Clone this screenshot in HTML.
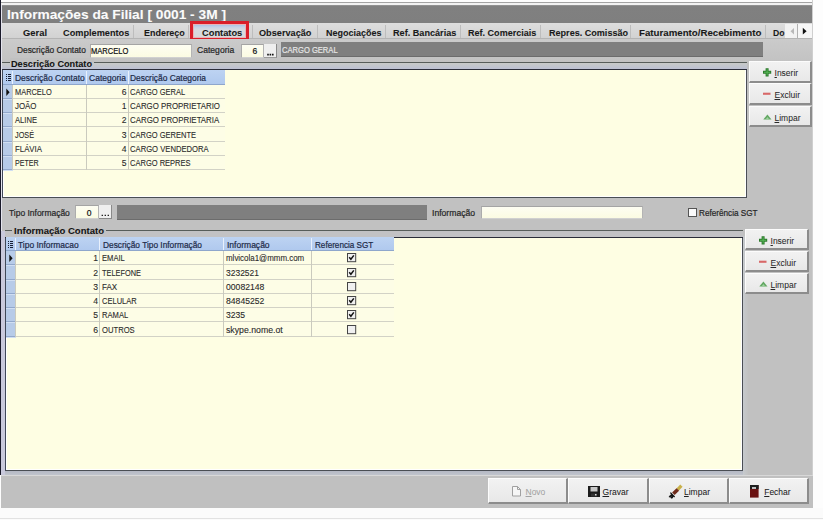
<!DOCTYPE html><html><head><meta charset="utf-8"><style>
html,body{margin:0;padding:0;}
body{width:823px;height:520px;position:relative;overflow:hidden;background:#fdfdfd;font-family:"Liberation Sans",sans-serif;}
.t{position:absolute;white-space:pre;line-height:1;-webkit-text-stroke:0.2px currentColor;}
.btn{position:absolute;background:linear-gradient(#f2f2f2,#e8e8e8);border-right:2px solid #8c8c8c;border-bottom:2px solid #8c8c8c;border-top:1px solid #fcfcfc;border-left:1px solid #fcfcfc;box-sizing:border-box;}
</style></head><body>
<div style="position:absolute;left:1.00px;top:2.00px;width:812.00px;height:506.00px;background:#c1c1c1"></div>
<div style="position:absolute;left:1.00px;top:2.00px;width:812.00px;height:1.00px;background:#a4a4a4"></div>
<div style="position:absolute;left:1.00px;top:3.00px;width:812.00px;height:2.00px;background:#f2f2f2"></div>
<div style="position:absolute;left:0.00px;top:0.00px;width:1.00px;height:475.00px;background:#1a1a2a"></div>
<div style="position:absolute;left:1.00px;top:5.00px;width:1.00px;height:470.00px;background:#e4e4ee"></div>
<div style="position:absolute;left:812.00px;top:0.00px;width:1.00px;height:508.00px;background:#cfcfcf"></div>
<div style="position:absolute;left:2.00px;top:5.00px;width:810.00px;height:18.00px;background:linear-gradient(#9a9a9a,#808080 1.5px,#7f7f7f)"></div>
<div class="t" style="left:6.80px;top:8.00px;font-size:13.7px;color:#fbfbfb;font-weight:bold;-webkit-text-stroke:0.08px currentColor;transform:scaleX(1.003);transform-origin:0 0;">Informações da Filial [ 0001 - 3M ]</div>
<div style="position:absolute;left:2.00px;top:23.00px;width:810.00px;height:15.00px;background:linear-gradient(#dddddd,#d2d2d2)"></div>
<div style="position:absolute;left:2.00px;top:37.50px;width:810.00px;height:1.00px;background:#b4b4b4"></div>
<div style="position:absolute;left:133.00px;top:25.00px;width:1.00px;height:12.50px;background:#bdbdbd"></div>
<div style="position:absolute;left:188.00px;top:25.00px;width:1.00px;height:12.50px;background:#bdbdbd"></div>
<div style="position:absolute;left:252.00px;top:25.00px;width:1.00px;height:12.50px;background:#bdbdbd"></div>
<div style="position:absolute;left:317.00px;top:25.00px;width:1.00px;height:12.50px;background:#bdbdbd"></div>
<div style="position:absolute;left:385.00px;top:25.00px;width:1.00px;height:12.50px;background:#bdbdbd"></div>
<div style="position:absolute;left:460.00px;top:25.00px;width:1.00px;height:12.50px;background:#bdbdbd"></div>
<div style="position:absolute;left:540.00px;top:25.00px;width:1.00px;height:12.50px;background:#bdbdbd"></div>
<div style="position:absolute;left:630.00px;top:25.00px;width:1.00px;height:12.50px;background:#bdbdbd"></div>
<div style="position:absolute;left:765.00px;top:25.00px;width:1.00px;height:12.50px;background:#bdbdbd"></div>
<div style="position:absolute;left:192.00px;top:23.50px;width:55.00px;height:16.00px;background:linear-gradient(#9ebae4,#c4d2e6 3px,#d8dadf 6px,#d8d8d8)"></div>
<div class="t" style="left:22.90px;top:27.67px;font-size:9.6px;color:#1a1a1a;font-weight:bold;-webkit-text-stroke:0.08px currentColor;transform:scaleX(0.978);transform-origin:0 0;">Geral</div>
<div class="t" style="left:62.90px;top:27.67px;font-size:9.6px;color:#1a1a1a;font-weight:bold;-webkit-text-stroke:0.08px currentColor;transform:scaleX(0.957);transform-origin:0 0;">Complementos</div>
<div class="t" style="left:144.20px;top:27.67px;font-size:9.6px;color:#1a1a1a;font-weight:bold;-webkit-text-stroke:0.08px currentColor;transform:scaleX(0.933);transform-origin:0 0;">Endereço</div>
<div class="t" style="left:201.70px;top:27.67px;font-size:9.6px;color:#1a1a1a;font-weight:bold;-webkit-text-stroke:0.08px currentColor;transform:scaleX(0.969);transform-origin:0 0;">Contatos</div>
<div class="t" style="left:259.00px;top:27.67px;font-size:9.6px;color:#1a1a1a;font-weight:bold;-webkit-text-stroke:0.08px currentColor;transform:scaleX(0.954);transform-origin:0 0;">Observação</div>
<div class="t" style="left:325.80px;top:27.67px;font-size:9.6px;color:#1a1a1a;font-weight:bold;-webkit-text-stroke:0.08px currentColor;transform:scaleX(0.936);transform-origin:0 0;">Negociações</div>
<div class="t" style="left:392.90px;top:27.67px;font-size:9.6px;color:#1a1a1a;font-weight:bold;-webkit-text-stroke:0.08px currentColor;transform:scaleX(0.950);transform-origin:0 0;">Ref. Bancárias</div>
<div class="t" style="left:468.10px;top:27.67px;font-size:9.6px;color:#1a1a1a;font-weight:bold;-webkit-text-stroke:0.08px currentColor;transform:scaleX(0.942);transform-origin:0 0;">Ref. Comerciais</div>
<div class="t" style="left:548.50px;top:27.67px;font-size:9.6px;color:#1a1a1a;font-weight:bold;-webkit-text-stroke:0.08px currentColor;transform:scaleX(0.944);transform-origin:0 0;">Repres. Comissão</div>
<div class="t" style="left:638.70px;top:27.67px;font-size:9.6px;color:#1a1a1a;font-weight:bold;-webkit-text-stroke:0.08px currentColor;transform:scaleX(1.011);transform-origin:0 0;">Faturamento/Recebimento</div>
<div class="t" style="left:773.30px;top:27.67px;font-size:9.6px;color:#1a1a1a;font-weight:bold;-webkit-text-stroke:0.08px currentColor;transform:scaleX(0.899);transform-origin:0 0;">Do</div>
<div style="position:absolute;left:190.00px;top:21.00px;width:59.00px;height:20.00px;border:3px solid #da1e2a;box-sizing:border-box;box-shadow:inset 0 0 0 1px #eab4b8"></div>
<div style="position:absolute;left:784.50px;top:24.00px;width:13.00px;height:14.00px;background:#f2f2f2;border-right:1px solid #b0b0b0;box-sizing:border-box"></div>
<div style="position:absolute;left:797.50px;top:24.00px;width:14.50px;height:14.00px;background:#f6f6f6"></div>
<svg style="position:absolute;left:785px;top:24px" width="27" height="14"><path d="M9 4 L5.5 7.2 L9 10.4Z" fill="#b8b8b8"/><path d="M17.8 3.8 L21.6 7.2 L17.8 10.6Z" fill="#111"/></svg>
<div style="position:absolute;left:2.00px;top:39.00px;width:810.00px;height:23.00px;background:linear-gradient(#cbcbcb,#c2c2c2)"></div>
<div class="t" style="left:17.40px;top:46.40px;font-size:8.5px;color:#262626;transform:scaleX(0.984);transform-origin:0 0;">Descrição Contato</div>
<div style="position:absolute;left:90.00px;top:43.80px;width:101.50px;height:14.20px;background:linear-gradient(#fdfdf2,#fbfbe2);border-top:1px solid #a4a4a4;border-left:1px solid #acacac;border-right:1px solid #b4b4b4;border-bottom:1px solid #d0d0d0;box-sizing:border-box"></div>
<div class="t" style="left:91.20px;top:46.92px;font-size:8.6px;color:#111;transform:scaleX(0.880);transform-origin:0 0;">MARCELO</div>
<div class="t" style="left:196.80px;top:46.40px;font-size:8.5px;color:#262626;transform:scaleX(1.009);transform-origin:0 0;">Categoria</div>
<div style="position:absolute;left:240.50px;top:44.00px;width:23.50px;height:14.00px;background:linear-gradient(#fdfdf2,#fbfbe2);border-top:1px solid #a4a4a4;border-left:1px solid #acacac;border-right:1px solid #b4b4b4;border-bottom:1px solid #d0d0d0;box-sizing:border-box"></div>
<div class="t" style="left:252.60px;top:47.00px;font-size:8.5px;color:#111;">6</div>
<div style="position:absolute;left:264.00px;top:44.00px;width:13.00px;height:14.00px;background:#efefef;border-right:1.5px solid #8a8a8a;border-bottom:1px solid #9a9a9a;box-sizing:border-box"></div>
<svg style="position:absolute;left:264px;top:44px" width="13" height="14"><path d="M3.2 10.6h1.6M5.6 10.6h1.6M8 10.6h1.6" stroke="#111" stroke-width="1.8"/></svg>
<div style="position:absolute;left:280.60px;top:42.00px;width:482.40px;height:14.80px;background:#7f7f7f;border-bottom:1px solid #6c6c6c;box-sizing:border-box"></div>
<div class="t" style="left:282.20px;top:46.10px;font-size:8.5px;color:#e6e6e6;transform:scaleX(0.892);transform-origin:0 0;">CARGO GERAL</div>
<div style="position:absolute;left:2.00px;top:62.00px;width:745.00px;height:1.00px;background:#575d5a"></div>
<div style="position:absolute;left:2.00px;top:63.00px;width:745.00px;height:6.30px;background:linear-gradient(#c8cac8,#bcc0d2)"></div>
<div style="position:absolute;left:2.00px;top:69.00px;width:745.00px;height:1.00px;background:#2a2c38"></div>
<div style="position:absolute;left:2.00px;top:70.00px;width:745.00px;height:127.50px;background:#fefee3;border-right:1.5px solid #4a4e54;border-bottom:1.5px solid #4a4e54;border-left:1px solid #404858;box-sizing:border-box;box-shadow:inset 1px 0 #ffffff, inset -1px -1px #ffffff"></div>
<div style="position:absolute;left:9.50px;top:58.00px;width:84.50px;height:5.20px;background:#c1c1c1"></div>
<div class="t" style="left:11.00px;top:58.54px;font-size:9.4px;color:#141414;font-weight:bold;-webkit-text-stroke:0.08px currentColor;transform:scaleX(0.978);transform-origin:0 0;">Descrição Contato</div>
<div style="position:absolute;left:1.00px;top:231.00px;width:3.50px;height:244.00px;background:#c9c9dc"></div>
<div style="position:absolute;left:5.00px;top:471.00px;width:738.00px;height:4.00px;background:linear-gradient(#b4b8c4,#c0c4cc)"></div>
<div style="position:absolute;left:743.00px;top:236.00px;width:5.00px;height:239.00px;background:linear-gradient(90deg,#c6cace,#c2c2c2)"></div>
<div style="position:absolute;left:4.50px;top:229.50px;width:738.00px;height:1.00px;background:#575d5a"></div>
<div style="position:absolute;left:4.50px;top:230.50px;width:738.00px;height:6.30px;background:#c2c2c4"></div>
<div style="position:absolute;left:4.50px;top:236.50px;width:738.00px;height:1.00px;background:#2a2c38"></div>
<div style="position:absolute;left:4.50px;top:237.50px;width:738.00px;height:233.00px;background:#fefee3;border-right:1.5px solid #4a4e54;border-bottom:1.5px solid #4a4e54;border-left:1px solid #404858;box-sizing:border-box;box-shadow:inset 1px 0 #ffffff, inset -1px -1px #ffffff"></div>
<div style="position:absolute;left:12.10px;top:225.50px;width:93.50px;height:5.20px;background:#c1c1c1"></div>
<div class="t" style="left:13.60px;top:226.04px;font-size:9.4px;color:#141414;font-weight:bold;-webkit-text-stroke:0.08px currentColor;transform:scaleX(1.016);transform-origin:0 0;">Informação Contato</div>
<div style="position:absolute;left:3.00px;top:69.50px;width:221.50px;height:15.00px;background:linear-gradient(#bdd3f2,#b0c9ee);border-bottom:1px solid #8ea6cc;box-sizing:border-box"></div>
<div style="position:absolute;left:3.00px;top:84.50px;width:10.00px;height:85.62px;background:#b7cbe8"></div>
<div style="position:absolute;left:13.00px;top:84.50px;width:211.50px;height:85.62px;background:#fdfde6"></div>
<div style="position:absolute;left:13.00px;top:97.77px;width:211.50px;height:1.00px;background:#d2d2c6"></div>
<div style="position:absolute;left:3.00px;top:97.77px;width:10.00px;height:1.00px;background:#92a8cc"></div>
<div style="position:absolute;left:3.00px;top:98.77px;width:10.00px;height:1.00px;background:#d0def2"></div>
<div style="position:absolute;left:13.00px;top:112.04px;width:211.50px;height:1.00px;background:#d2d2c6"></div>
<div style="position:absolute;left:3.00px;top:112.04px;width:10.00px;height:1.00px;background:#92a8cc"></div>
<div style="position:absolute;left:3.00px;top:113.04px;width:10.00px;height:1.00px;background:#d0def2"></div>
<div style="position:absolute;left:13.00px;top:126.31px;width:211.50px;height:1.00px;background:#d2d2c6"></div>
<div style="position:absolute;left:3.00px;top:126.31px;width:10.00px;height:1.00px;background:#92a8cc"></div>
<div style="position:absolute;left:3.00px;top:127.31px;width:10.00px;height:1.00px;background:#d0def2"></div>
<div style="position:absolute;left:13.00px;top:140.58px;width:211.50px;height:1.00px;background:#d2d2c6"></div>
<div style="position:absolute;left:3.00px;top:140.58px;width:10.00px;height:1.00px;background:#92a8cc"></div>
<div style="position:absolute;left:3.00px;top:141.58px;width:10.00px;height:1.00px;background:#d0def2"></div>
<div style="position:absolute;left:13.00px;top:154.85px;width:211.50px;height:1.00px;background:#d2d2c6"></div>
<div style="position:absolute;left:3.00px;top:154.85px;width:10.00px;height:1.00px;background:#92a8cc"></div>
<div style="position:absolute;left:3.00px;top:155.85px;width:10.00px;height:1.00px;background:#d0def2"></div>
<div style="position:absolute;left:13.00px;top:169.12px;width:211.50px;height:1.00px;background:#d2d2c6"></div>
<div style="position:absolute;left:3.00px;top:169.12px;width:10.00px;height:1.00px;background:#92a8cc"></div>
<div style="position:absolute;left:3.00px;top:170.12px;width:10.00px;height:1.00px;background:#d0def2"></div>
<div style="position:absolute;left:12.00px;top:70.50px;width:1.00px;height:13.00px;background:#e8f0fc"></div>
<div style="position:absolute;left:12.00px;top:84.50px;width:1.00px;height:85.62px;background:#cacabe"></div>
<div style="position:absolute;left:86.00px;top:70.50px;width:1.00px;height:13.00px;background:#e8f0fc"></div>
<div style="position:absolute;left:86.00px;top:84.50px;width:1.00px;height:85.62px;background:#cacabe"></div>
<div style="position:absolute;left:127.50px;top:70.50px;width:1.00px;height:13.00px;background:#e8f0fc"></div>
<div style="position:absolute;left:127.50px;top:84.50px;width:1.00px;height:85.62px;background:#cacabe"></div>
<div style="position:absolute;left:223.50px;top:70.50px;width:1.00px;height:13.00px;#8a9ab8"></div>
<div style="position:absolute;left:223.50px;top:84.50px;width:1.00px;height:85.62px;#a8a8a0"></div>
<div class="t" style="left:14.50px;top:73.50px;font-size:8.5px;color:#1c2a48;transform:scaleX(0.997);transform-origin:0 0;">Descrição Contato</div>
<div class="t" style="left:88.50px;top:73.50px;font-size:8.5px;color:#1c2a48;transform:scaleX(1.001);transform-origin:0 0;">Categoria</div>
<div class="t" style="left:130.00px;top:73.50px;font-size:8.5px;color:#1c2a48;transform:scaleX(0.987);transform-origin:0 0;">Descrição Categoria</div>
<svg style="position:absolute;left:6px;top:73px" width="6" height="9"><path d="M0 1.5h1M0 3.5h1M0 5.5h1M0 7.5h1M2 1.5h3M2 3.5h3M2 5.5h3M2 7.5h3" stroke="#1a2238" stroke-width="1"/></svg>
<svg style="position:absolute;left:6.2px;top:87.7px" width="6" height="9"><path d="M0.3 0.5 L3.6 4.2 L0.3 7.9Z" fill="#111"/></svg>
<div class="t" style="left:14.70px;top:87.92px;font-size:8.6px;color:#2a2a2a;transform:scaleX(0.864);transform-origin:0 0;-webkit-text-stroke:0.1px #2a2a2a">MARCELO</div>
<div class="t" style="left:26.50px;width:100px;text-align:right;top:87.92px;font-size:8.6px;color:#2a2a2a;-webkit-text-stroke:0.1px #2a2a2a">6</div>
<div class="t" style="left:130.20px;top:87.92px;font-size:8.6px;color:#2a2a2a;transform:scaleX(0.877);transform-origin:0 0;-webkit-text-stroke:0.1px #2a2a2a">CARGO GERAL</div>
<div class="t" style="left:14.70px;top:102.19px;font-size:8.6px;color:#2a2a2a;transform:scaleX(0.919);transform-origin:0 0;-webkit-text-stroke:0.1px #2a2a2a">JOÃO</div>
<div class="t" style="left:26.50px;width:100px;text-align:right;top:102.19px;font-size:8.6px;color:#2a2a2a;-webkit-text-stroke:0.1px #2a2a2a">1</div>
<div class="t" style="left:130.20px;top:102.19px;font-size:8.6px;color:#2a2a2a;transform:scaleX(0.916);transform-origin:0 0;-webkit-text-stroke:0.1px #2a2a2a">CARGO PROPRIETARIO</div>
<div class="t" style="left:14.70px;top:116.46px;font-size:8.6px;color:#2a2a2a;transform:scaleX(0.886);transform-origin:0 0;-webkit-text-stroke:0.1px #2a2a2a">ALINE</div>
<div class="t" style="left:26.50px;width:100px;text-align:right;top:116.46px;font-size:8.6px;color:#2a2a2a;-webkit-text-stroke:0.1px #2a2a2a">2</div>
<div class="t" style="left:130.20px;top:116.46px;font-size:8.6px;color:#2a2a2a;transform:scaleX(0.918);transform-origin:0 0;-webkit-text-stroke:0.1px #2a2a2a">CARGO PROPRIETARIA</div>
<div class="t" style="left:14.70px;top:130.73px;font-size:8.6px;color:#2a2a2a;transform:scaleX(0.846);transform-origin:0 0;-webkit-text-stroke:0.1px #2a2a2a">JOSÉ</div>
<div class="t" style="left:26.50px;width:100px;text-align:right;top:130.73px;font-size:8.6px;color:#2a2a2a;-webkit-text-stroke:0.1px #2a2a2a">3</div>
<div class="t" style="left:130.20px;top:130.73px;font-size:8.6px;color:#2a2a2a;transform:scaleX(0.875);transform-origin:0 0;-webkit-text-stroke:0.1px #2a2a2a">CARGO GERENTE</div>
<div class="t" style="left:14.70px;top:145.00px;font-size:8.6px;color:#2a2a2a;transform:scaleX(0.911);transform-origin:0 0;-webkit-text-stroke:0.1px #2a2a2a">FLÁVIA</div>
<div class="t" style="left:26.50px;width:100px;text-align:right;top:145.00px;font-size:8.6px;color:#2a2a2a;-webkit-text-stroke:0.1px #2a2a2a">4</div>
<div class="t" style="left:130.20px;top:145.00px;font-size:8.6px;color:#2a2a2a;transform:scaleX(0.891);transform-origin:0 0;-webkit-text-stroke:0.1px #2a2a2a">CARGO VENDEDORA</div>
<div class="t" style="left:14.70px;top:159.27px;font-size:8.6px;color:#2a2a2a;transform:scaleX(0.827);transform-origin:0 0;-webkit-text-stroke:0.1px #2a2a2a">PETER</div>
<div class="t" style="left:26.50px;width:100px;text-align:right;top:159.27px;font-size:8.6px;color:#2a2a2a;-webkit-text-stroke:0.1px #2a2a2a">5</div>
<div class="t" style="left:130.20px;top:159.27px;font-size:8.6px;color:#2a2a2a;transform:scaleX(0.875);transform-origin:0 0;-webkit-text-stroke:0.1px #2a2a2a">CARGO REPRES</div>
<div style="position:absolute;left:6.00px;top:236.50px;width:387.50px;height:14.50px;background:linear-gradient(#bdd3f2,#b0c9ee);border-bottom:1px solid #8ea6cc;box-sizing:border-box"></div>
<div style="position:absolute;left:6.00px;top:251.00px;width:9.50px;height:85.50px;background:#b7cbe8"></div>
<div style="position:absolute;left:15.50px;top:251.00px;width:378.00px;height:85.50px;background:#fdfde6"></div>
<div style="position:absolute;left:15.50px;top:264.25px;width:378.00px;height:1.00px;background:#d2d2c6"></div>
<div style="position:absolute;left:6.00px;top:264.25px;width:9.50px;height:1.00px;background:#92a8cc"></div>
<div style="position:absolute;left:6.00px;top:265.25px;width:9.50px;height:1.00px;background:#d0def2"></div>
<div style="position:absolute;left:15.50px;top:278.50px;width:378.00px;height:1.00px;background:#d2d2c6"></div>
<div style="position:absolute;left:6.00px;top:278.50px;width:9.50px;height:1.00px;background:#92a8cc"></div>
<div style="position:absolute;left:6.00px;top:279.50px;width:9.50px;height:1.00px;background:#d0def2"></div>
<div style="position:absolute;left:15.50px;top:292.75px;width:378.00px;height:1.00px;background:#d2d2c6"></div>
<div style="position:absolute;left:6.00px;top:292.75px;width:9.50px;height:1.00px;background:#92a8cc"></div>
<div style="position:absolute;left:6.00px;top:293.75px;width:9.50px;height:1.00px;background:#d0def2"></div>
<div style="position:absolute;left:15.50px;top:307.00px;width:378.00px;height:1.00px;background:#d2d2c6"></div>
<div style="position:absolute;left:6.00px;top:307.00px;width:9.50px;height:1.00px;background:#92a8cc"></div>
<div style="position:absolute;left:6.00px;top:308.00px;width:9.50px;height:1.00px;background:#d0def2"></div>
<div style="position:absolute;left:15.50px;top:321.25px;width:378.00px;height:1.00px;background:#d2d2c6"></div>
<div style="position:absolute;left:6.00px;top:321.25px;width:9.50px;height:1.00px;background:#92a8cc"></div>
<div style="position:absolute;left:6.00px;top:322.25px;width:9.50px;height:1.00px;background:#d0def2"></div>
<div style="position:absolute;left:15.50px;top:335.50px;width:378.00px;height:1.00px;background:#d2d2c6"></div>
<div style="position:absolute;left:6.00px;top:335.50px;width:9.50px;height:1.00px;background:#92a8cc"></div>
<div style="position:absolute;left:6.00px;top:336.50px;width:9.50px;height:1.00px;background:#d0def2"></div>
<div style="position:absolute;left:14.50px;top:237.50px;width:1.00px;height:12.50px;background:#e8f0fc"></div>
<div style="position:absolute;left:14.50px;top:251.00px;width:1.00px;height:85.50px;background:#cacabe"></div>
<div style="position:absolute;left:99.00px;top:237.50px;width:1.00px;height:12.50px;background:#e8f0fc"></div>
<div style="position:absolute;left:99.00px;top:251.00px;width:1.00px;height:85.50px;background:#cacabe"></div>
<div style="position:absolute;left:223.00px;top:237.50px;width:1.00px;height:12.50px;background:#e8f0fc"></div>
<div style="position:absolute;left:223.00px;top:251.00px;width:1.00px;height:85.50px;background:#cacabe"></div>
<div style="position:absolute;left:311.00px;top:237.50px;width:1.00px;height:12.50px;background:#e8f0fc"></div>
<div style="position:absolute;left:311.00px;top:251.00px;width:1.00px;height:85.50px;background:#cacabe"></div>
<div style="position:absolute;left:392.50px;top:237.50px;width:1.00px;height:12.50px;#8a9ab8"></div>
<div style="position:absolute;left:392.50px;top:251.00px;width:1.00px;height:85.50px;#a8a8a0"></div>
<div class="t" style="left:18.00px;top:240.50px;font-size:8.5px;color:#1c2a48;transform:scaleX(0.992);transform-origin:0 0;">Tipo Informacao</div>
<div class="t" style="left:102.50px;top:240.50px;font-size:8.5px;color:#1c2a48;transform:scaleX(0.979);transform-origin:0 0;">Descrição Tipo Informação</div>
<div class="t" style="left:226.50px;top:240.50px;font-size:8.5px;color:#1c2a48;transform:scaleX(1.002);transform-origin:0 0;">Informação</div>
<div class="t" style="left:314.50px;top:240.50px;font-size:8.5px;color:#1c2a48;transform:scaleX(0.956);transform-origin:0 0;">Referencia SGT</div>
<svg style="position:absolute;left:8px;top:240px" width="6" height="9"><path d="M0 1.5h1M0 3.5h1M0 5.5h1M0 7.5h1M2 1.5h3M2 3.5h3M2 5.5h3M2 7.5h3" stroke="#1a2238" stroke-width="1"/></svg>
<svg style="position:absolute;left:9.2px;top:254.2px" width="6" height="9"><path d="M0.3 0.5 L3.6 4.2 L0.3 7.9Z" fill="#111"/></svg>
<div class="t" style="left:-2.00px;width:100px;text-align:right;top:254.42px;font-size:8.6px;color:#2a2a2a;-webkit-text-stroke:0.1px #2a2a2a">1</div>
<div class="t" style="left:101.70px;top:254.42px;font-size:8.6px;color:#2a2a2a;transform:scaleX(0.884);transform-origin:0 0;-webkit-text-stroke:0.1px #2a2a2a">EMAIL</div>
<div class="t" style="left:225.70px;top:254.42px;font-size:8.6px;color:#2a2a2a;transform:scaleX(0.924);transform-origin:0 0;-webkit-text-stroke:0.1px #2a2a2a">mlvicola1@mmm.com</div>
<svg style="position:absolute;left:347.45px;top:253.40px" width="10" height="10"><rect x="0.5" y="0.5" width="8.2" height="8.2" fill="#f0f0f0" stroke="#454545" stroke-width="1"/><path d="M2.2 4.2 L3.9 6.2 L6.8 2.4" stroke="#111" stroke-width="1.5" fill="none"/></svg>
<div class="t" style="left:-2.00px;width:100px;text-align:right;top:268.67px;font-size:8.6px;color:#2a2a2a;-webkit-text-stroke:0.1px #2a2a2a">2</div>
<div class="t" style="left:101.70px;top:268.67px;font-size:8.6px;color:#2a2a2a;transform:scaleX(0.857);transform-origin:0 0;-webkit-text-stroke:0.1px #2a2a2a">TELEFONE</div>
<div class="t" style="left:225.70px;top:268.67px;font-size:8.6px;color:#2a2a2a;transform:scaleX(0.986);transform-origin:0 0;-webkit-text-stroke:0.1px #2a2a2a">3232521</div>
<svg style="position:absolute;left:347.45px;top:267.65px" width="10" height="10"><rect x="0.5" y="0.5" width="8.2" height="8.2" fill="#f0f0f0" stroke="#454545" stroke-width="1"/><path d="M2.2 4.2 L3.9 6.2 L6.8 2.4" stroke="#111" stroke-width="1.5" fill="none"/></svg>
<div class="t" style="left:-2.00px;width:100px;text-align:right;top:282.92px;font-size:8.6px;color:#2a2a2a;-webkit-text-stroke:0.1px #2a2a2a">3</div>
<div class="t" style="left:101.70px;top:282.92px;font-size:8.6px;color:#2a2a2a;transform:scaleX(0.935);transform-origin:0 0;-webkit-text-stroke:0.1px #2a2a2a">FAX</div>
<div class="t" style="left:225.70px;top:282.92px;font-size:8.6px;color:#2a2a2a;transform:scaleX(1.004);transform-origin:0 0;-webkit-text-stroke:0.1px #2a2a2a">00082148</div>
<svg style="position:absolute;left:347.45px;top:281.90px" width="10" height="10"><rect x="0.5" y="0.5" width="8.2" height="8.2" fill="#f0f0f0" stroke="#454545" stroke-width="1"/></svg>
<div class="t" style="left:-2.00px;width:100px;text-align:right;top:297.17px;font-size:8.6px;color:#2a2a2a;-webkit-text-stroke:0.1px #2a2a2a">4</div>
<div class="t" style="left:101.70px;top:297.17px;font-size:8.6px;color:#2a2a2a;transform:scaleX(0.875);transform-origin:0 0;-webkit-text-stroke:0.1px #2a2a2a">CELULAR</div>
<div class="t" style="left:225.70px;top:297.17px;font-size:8.6px;color:#2a2a2a;transform:scaleX(1.004);transform-origin:0 0;-webkit-text-stroke:0.1px #2a2a2a">84845252</div>
<svg style="position:absolute;left:347.45px;top:296.15px" width="10" height="10"><rect x="0.5" y="0.5" width="8.2" height="8.2" fill="#f0f0f0" stroke="#454545" stroke-width="1"/><path d="M2.2 4.2 L3.9 6.2 L6.8 2.4" stroke="#111" stroke-width="1.5" fill="none"/></svg>
<div class="t" style="left:-2.00px;width:100px;text-align:right;top:311.42px;font-size:8.6px;color:#2a2a2a;-webkit-text-stroke:0.1px #2a2a2a">5</div>
<div class="t" style="left:101.70px;top:311.42px;font-size:8.6px;color:#2a2a2a;transform:scaleX(0.885);transform-origin:0 0;-webkit-text-stroke:0.1px #2a2a2a">RAMAL</div>
<div class="t" style="left:225.70px;top:311.42px;font-size:8.6px;color:#2a2a2a;transform:scaleX(0.999);transform-origin:0 0;-webkit-text-stroke:0.1px #2a2a2a">3235</div>
<svg style="position:absolute;left:347.45px;top:310.40px" width="10" height="10"><rect x="0.5" y="0.5" width="8.2" height="8.2" fill="#f0f0f0" stroke="#454545" stroke-width="1"/><path d="M2.2 4.2 L3.9 6.2 L6.8 2.4" stroke="#111" stroke-width="1.5" fill="none"/></svg>
<div class="t" style="left:-2.00px;width:100px;text-align:right;top:325.67px;font-size:8.6px;color:#2a2a2a;-webkit-text-stroke:0.1px #2a2a2a">6</div>
<div class="t" style="left:101.70px;top:325.67px;font-size:8.6px;color:#2a2a2a;transform:scaleX(0.889);transform-origin:0 0;-webkit-text-stroke:0.1px #2a2a2a">OUTROS</div>
<div class="t" style="left:225.70px;top:325.67px;font-size:8.6px;color:#2a2a2a;transform:scaleX(1.014);transform-origin:0 0;-webkit-text-stroke:0.1px #2a2a2a">skype.nome.ot</div>
<svg style="position:absolute;left:347.45px;top:324.65px" width="10" height="10"><rect x="0.5" y="0.5" width="8.2" height="8.2" fill="#f0f0f0" stroke="#454545" stroke-width="1"/></svg>
<div class="t" style="left:9.40px;top:208.50px;font-size:8.5px;color:#262626;transform:scaleX(0.995);transform-origin:0 0;">Tipo Informação</div>
<div style="position:absolute;left:74.50px;top:205.00px;width:24.00px;height:14.00px;background:linear-gradient(#fdfdf2,#fbfbe2);border-top:1px solid #a4a4a4;border-left:1px solid #acacac;border-right:1px solid #b4b4b4;border-bottom:1px solid #d0d0d0;box-sizing:border-box"></div>
<div class="t" style="left:86.80px;top:208.70px;font-size:8.5px;color:#111;">0</div>
<div style="position:absolute;left:98.50px;top:205.00px;width:13.50px;height:14.00px;background:#efefef;border-right:1px solid #8a8a8a;border-bottom:1px solid #8a8a8a;box-sizing:border-box"></div>
<svg style="position:absolute;left:98.5px;top:205px" width="13" height="14"><path d="M2.6 10.4h1.4M5.6 10.4h1.4M8.6 10.4h1.4" stroke="#222" stroke-width="1.4"/></svg>
<div style="position:absolute;left:116.50px;top:205.20px;width:310.20px;height:14.50px;background:#7f7f7f;border-bottom:1px solid #6c6c6c;box-sizing:border-box"></div>
<div class="t" style="left:432.10px;top:209.10px;font-size:8.5px;color:#262626;transform:scaleX(1.013);transform-origin:0 0;">Informação</div>
<div style="position:absolute;left:480.70px;top:206.30px;width:162.00px;height:13.00px;background:linear-gradient(#fdfdf2,#fbfbe2);border-top:1px solid #a4a4a4;border-left:1px solid #acacac;border-right:1px solid #b4b4b4;border-bottom:1px solid #d0d0d0;box-sizing:border-box"></div>
<svg style="position:absolute;left:688px;top:208px" width="10" height="10"><rect x="0.5" y="0.5" width="8" height="8" fill="#fafafa" stroke="#555" stroke-width="1"/></svg>
<div class="t" style="left:699.00px;top:208.90px;font-size:8.5px;color:#262626;transform:scaleX(0.961);transform-origin:0 0;">Referência SGT</div>
<div class="btn" style="left:748.5px;top:61px;width:63.2px;height:22px"></div>
<svg style="position:absolute;left:763.0px;top:67.5px" width="9" height="9"><path d="M2.6 0.2h3v2.6h2.6v3h-2.6v2.6h-3v-2.6h-2.6v-3h2.6z" fill="#2c7a2c"/><path d="M3.6 1.2h1v2.6h2.6v1h-2.6v2.6h-1v-2.6h-2.6v-1h2.6z" fill="#58b858"/></svg>
<div class="t" style="left:774.50px;top:68.60px;font-size:8.5px;color:#2a2a2a;-webkit-text-stroke:0.05px #2a2a2a"><u>I</u>nserir</div>
<div class="btn" style="left:748.5px;top:83px;width:63.2px;height:22px"></div>
<svg style="position:absolute;left:763.2px;top:92px" width="9" height="4"><rect x="0" y="0.7" width="7.5" height="2.1" fill="#d86868"/></svg>
<div class="t" style="left:774.50px;top:90.60px;font-size:8.5px;color:#2a2a2a;-webkit-text-stroke:0.05px #2a2a2a"><u>E</u>xcluir</div>
<div class="btn" style="left:748.5px;top:106px;width:63.2px;height:21px"></div>
<svg style="position:absolute;left:763.0px;top:114.2px" width="10" height="6"><path d="M0.3 5.5 L4.4 0.4 L8.5 5.5Z" fill="#62a862"/><path d="M2.4 5.5 L4.4 3 L6.4 5.5Z" fill="#a0d0a0"/></svg>
<div class="t" style="left:774.50px;top:113.60px;font-size:8.5px;color:#2a2a2a;-webkit-text-stroke:0.05px #2a2a2a"><u>L</u>impar</div>
<div class="btn" style="left:744.5px;top:229px;width:64px;height:21px"></div>
<svg style="position:absolute;left:759.0px;top:235.5px" width="9" height="9"><path d="M2.6 0.2h3v2.6h2.6v3h-2.6v2.6h-3v-2.6h-2.6v-3h2.6z" fill="#2c7a2c"/><path d="M3.6 1.2h1v2.6h2.6v1h-2.6v2.6h-1v-2.6h-2.6v-1h2.6z" fill="#58b858"/></svg>
<div class="t" style="left:770.50px;top:236.60px;font-size:8.5px;color:#2a2a2a;-webkit-text-stroke:0.05px #2a2a2a"><u>I</u>nserir</div>
<div class="btn" style="left:744.5px;top:251px;width:64px;height:21px"></div>
<svg style="position:absolute;left:759.2px;top:260px" width="9" height="4"><rect x="0" y="0.7" width="7.5" height="2.1" fill="#d86868"/></svg>
<div class="t" style="left:770.50px;top:258.60px;font-size:8.5px;color:#2a2a2a;-webkit-text-stroke:0.05px #2a2a2a"><u>E</u>xcluir</div>
<div class="btn" style="left:744.5px;top:273px;width:64px;height:21.4px"></div>
<svg style="position:absolute;left:759.0px;top:281.2px" width="10" height="6"><path d="M0.3 5.5 L4.4 0.4 L8.5 5.5Z" fill="#62a862"/><path d="M2.4 5.5 L4.4 3 L6.4 5.5Z" fill="#a0d0a0"/></svg>
<div class="t" style="left:770.50px;top:280.60px;font-size:8.5px;color:#2a2a2a;-webkit-text-stroke:0.05px #2a2a2a"><u>L</u>impar</div>
<div style="position:absolute;left:1.00px;top:475.00px;width:812.00px;height:1.00px;background:#d8d8d8"></div>
<div style="position:absolute;left:1.00px;top:476.00px;width:812.00px;height:32.00px;background:#c0c0c0"></div>
<div class="btn" style="left:488px;top:478.2px;width:79.70000000000005px;height:25.8px"></div>
<svg style="position:absolute;left:511.8px;top:485.8px" width="10" height="11"><path d="M0.5 0.5h5l3 3v6.5h-8z" fill="#f6f6f6" stroke="#a0a0a0"/><path d="M5.5 0.5v3h3" fill="none" stroke="#a0a0a0"/></svg>
<div class="t" style="left:525.50px;top:488.10px;font-size:8.5px;color:#a4a4a4;-webkit-text-stroke:0.05px #a4a4a4"><u>N</u>ovo</div>
<div class="btn" style="left:567.7px;top:478.2px;width:81.0px;height:25.8px"></div>
<svg style="position:absolute;left:588px;top:486px" width="12" height="11"><rect x="0" y="0" width="12" height="11" fill="#1c1c1c"/><rect x="2.5" y="1" width="7" height="4.5" fill="#c8c8c8"/><rect x="3" y="7.5" width="6" height="3" fill="#333"/><rect x="7" y="8" width="1.5" height="1.5" fill="#ddd"/></svg>
<div class="t" style="left:602.50px;top:488.10px;font-size:8.5px;color:#222;-webkit-text-stroke:0.05px #222"><u>G</u>ravar</div>
<div class="btn" style="left:649px;top:478.2px;width:79.5px;height:25.8px"></div>
<svg style="position:absolute;left:668px;top:484px" width="15" height="15"><path d="M9.6 5.6 L13.4 1.6" stroke="#c8b048" stroke-width="3.2"/><path d="M5.4 9.8 L9.8 5.4" stroke="#6e2a1a" stroke-width="3.6"/><path d="M1.2 13.2 C2.5 10.5,6 11,4.2 13.6 C3.2 14.8,2 12,3.5 10.2 M2.4 8.6 L6.6 13" stroke="#111" stroke-width="1.3" fill="none"/></svg>
<div class="t" style="left:684.00px;top:488.10px;font-size:8.5px;color:#222;-webkit-text-stroke:0.05px #222"><u>L</u>impar</div>
<div class="btn" style="left:728.5px;top:478.2px;width:80.5px;height:25.8px"></div>
<svg style="position:absolute;left:750.2px;top:485.3px" width="9" height="13"><rect x="0" y="0" width="8.6" height="12.6" fill="#6a1212"/><rect x="0" y="0" width="8.6" height="4" fill="#1e1e1e"/><rect x="2" y="2.2" width="4" height="1.6" fill="#e8e8e8"/></svg>
<div class="t" style="left:764.20px;top:488.10px;font-size:8.5px;color:#222;-webkit-text-stroke:0.05px #222"><u>F</u>echar</div>
<div style="position:absolute;left:0.00px;top:508.00px;width:823.00px;height:12.00px;background:#fbfbfb"></div>
<div style="position:absolute;left:0.00px;top:518.00px;width:823.00px;height:1.00px;background:#e2e2e2"></div>
</body></html>
